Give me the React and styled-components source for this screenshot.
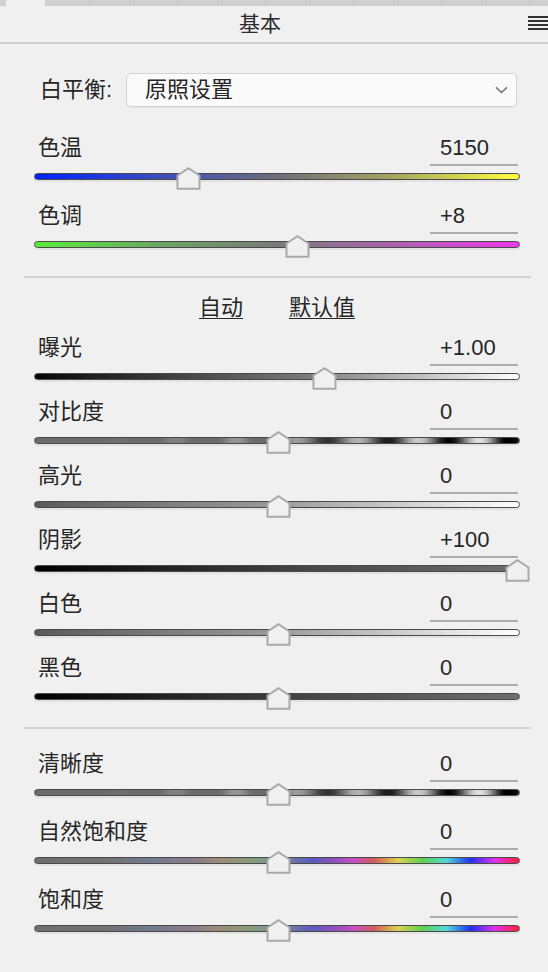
import React from "react"
import styled, { createGlobalStyle } from "styled-components"

/*
    Basic adjustments panel: white balance picker, tone sliders and presence sliders.
*/

const FONT = `"Liberation Sans", "Noto Sans CJK SC", sans-serif`

// contrast / clarity track: grey bands that get stronger towards the right
const stripeGradient = () => {
  const stops = []
  for (let i = 0; i <= 200; i++) {
    const p = i / 200
    const wave = Math.cos((2 * Math.PI * (p - 0.54)) / 0.1257)
    let l
    if (p < 0.5) {
      const amp = Math.max(0, (p - 0.15) / 0.35) * 55
      l = 108 + Math.max(0, wave) * amp
    } else {
      const amp = 40 + ((p - 0.5) / 0.5) * 90
      l = 108 + wave * amp
    }
    l = Math.round(Math.min(255, Math.max(0, l)))
    stops.push(`rgb(${l},${l},${l}) ${(p * 100).toFixed(1)}%`)
  }
  return `linear-gradient(to right, ${stops.join(", ")})`
}

const hueRamp =
  "linear-gradient(to right, #6e6e6e 0%, #727272 15%, #707a90 24%, #8a7a8a 32%, #9a8a78 38%, #8a9a78 44%, #7a9a8a 48%, #7080a0 52%, #5a5ac0 57%, #9050c0 62%, #c850c0 66%, #d05a5a 70%, #dcd250 75%, #60d050 80%, #50d8d8 85%, #2030f0 90%, #e030f0 95%, #ff2030 100%)"

const GRADIENTS = {
  temp: "linear-gradient(to right, #0022ff 0%, #3a4cc0 25%, #6d6d7a 50%, #a8a860 75%, #ffff40 100%)",
  tint: "linear-gradient(to right, #58ee3a 0%, #6aa860 25%, #7a7a7a 50%, #b060b0 75%, #ee38ee 100%)",
  exposure: "linear-gradient(to right, #050505 0%, #777777 55%, #ffffff 100%)",
  stripes: stripeGradient(),
  toWhite: "linear-gradient(to right, #5a5a5a 0%, #9a9a9a 50%, #ffffff 100%)",
  toGrey: "linear-gradient(to right, #000000 0%, #4a4a4a 60%, #6e6e6e 100%)",
  hue: hueRamp,
}

const whiteBalanceSliders = [
  { label: "色温", value: "5150", pos: 0.314, track: "temp" },
  { label: "色调", value: "+8", pos: 0.54, track: "tint" },
]

const toneSliders = [
  { label: "曝光", value: "+1.00", pos: 0.598, track: "exposure" },
  { label: "对比度", value: "0", pos: 0.5, track: "stripes" },
  { label: "高光", value: "0", pos: 0.5, track: "toWhite" },
  { label: "阴影", value: "+100", pos: 1, track: "toGrey" },
  { label: "白色", value: "0", pos: 0.5, track: "toWhite" },
  { label: "黑色", value: "0", pos: 0.5, track: "toGrey" },
]

const presenceSliders = [
  { label: "清晰度", value: "0", pos: 0.5, track: "stripes" },
  { label: "自然饱和度", value: "0", pos: 0.5, track: "hue" },
  { label: "饱和度", value: "0", pos: 0.5, track: "hue" },
]

const SliderThumb = () => (
  <svg width="25" height="23" viewBox="0 0 25 23">
    <path
      d="M1.5 8.5 L12.5 1.2 L23.5 8.5 V21.8 H1.5 Z"
      fill="#f0f0f0"
      stroke="#a9a9a9"
      strokeWidth="2"
      strokeLinejoin="miter"
    />
  </svg>
)

const Slider = ({ label, value, pos, track, pitch }) => (
  <SliderRow $pitch={pitch}>
    <RowHead>
      <Label>{label}</Label>
      <ValueBox>{value}</ValueBox>
    </RowHead>
    <Track $fill={GRADIENTS[track]}>
      {/* thumb travels between 3.5px insets of the 486px track */}
      <ThumbHolder style={{ left: `${3.5 + pos * 479 - 12.5}px` }}>
        <SliderThumb />
      </ThumbHolder>
    </Track>
  </SliderRow>
)

const SliderGroup = ({ items, pitch, top }) => (
  <Group $top={top}>
    {items.map(item => (
      <Slider key={item.label} pitch={pitch} {...item} />
    ))}
  </Group>
)

const App = () => {
  const tabs = Array.from({ length: 12 })
  return (
    <Panel>
      <GlobalStyle />
      <TabStrip>
        <TabSlot $active />
        {tabs.map((_, i) => (
          <TabSlot key={i} />
        ))}
      </TabStrip>
      <Header>
        <Title>基本</Title>
        <MenuButton width="20" height="14" viewBox="0 0 20 14">
          <rect x="0" y="0" width="20" height="2" fill="#333" />
          <rect x="0" y="4" width="20" height="2" fill="#333" />
          <rect x="0" y="8" width="20" height="2" fill="#333" />
          <rect x="0" y="12" width="20" height="2" fill="#333" />
        </MenuButton>
      </Header>
      <Content>
        <WbRow>
          <WbLabel>白平衡:</WbLabel>
          <Select>
            <span>原照设置</span>
            <svg width="13" height="8" viewBox="0 0 13 8">
              <path d="M1 1.2 L6.5 6.5 L12 1.2" fill="none" stroke="#6f6f6f" strokeWidth="1.5" />
            </svg>
          </Select>
        </WbRow>
        <SliderGroup items={whiteBalanceSliders} pitch={68} top={28} />
        <Divider $top={5} />
        <PresetLinks>
          <PresetLink>自动</PresetLink>
          <PresetLink>默认值</PresetLink>
        </PresetLinks>
        <SliderGroup items={toneSliders} pitch={64} top={14} />
        <Divider $top={8} />
        <SliderGroup items={presenceSliders} pitch={68} top={22} />
      </Content>
    </Panel>
  )
}

const GlobalStyle = createGlobalStyle`
  html, body {
    margin: 0;
    padding: 0;
    background: #f0f0f0;
  }
  body {
    font-family: ${FONT};
    color: #262626;
  }
`

const Panel = styled.div`
  width: 548px;
  min-height: 972px;
  background: #f0f0f0;
  overflow: hidden;
`

const TabStrip = styled.div`
  display: flex;
  height: 6px;
  padding-left: 6px;
  background: #d0d0d0;
`

const TabSlot = styled.div`
  flex: none;
  width: ${p => (p.$active ? "39px" : "43px")};
  height: 100%;
  background: ${p => (p.$active ? "#f0f0f0" : "transparent")};
  border-left: ${p => (p.$active ? "none" : "1px solid #c6c6c6")};
`

const Header = styled.div`
  display: grid;
  grid-template-columns: 1fr 28px;
  align-items: center;
  height: 36px;
  border-bottom: 2px solid #cfcfcf;
`

const Title = styled.div`
  text-align: center;
  font-size: 21px;
  line-height: 26px;
  color: #2a2a2a;
`

const MenuButton = styled.svg`
  justify-self: end;
  margin-top: -2px;
`

const Content = styled.div`
  padding: 0 28px 0 34px;
`

const WbRow = styled.div`
  display: flex;
  align-items: center;
  margin-top: 29px;
  height: 34px;
`

const WbLabel = styled.div`
  flex: none;
  width: 86px;
  padding-left: 6px;
  font-size: 22px;
  line-height: 26px;
`

const Select = styled.div`
  flex: 1;
  display: flex;
  align-items: center;
  justify-content: space-between;
  height: 34px;
  margin-right: 3px;
  padding: 0 8px 0 18px;
  box-sizing: border-box;
  background: #fafafa;
  border: 1px solid #d4d4d4;
  border-radius: 5px;
  box-shadow: 0 1px 1px rgba(0, 0, 0, 0.06);
  font-size: 22px;
  line-height: 26px;
`

const Group = styled.div`
  margin-top: ${p => p.$top}px;
`

const SliderRow = styled.div`
  height: ${p => p.$pitch}px;
`

const RowHead = styled.div`
  display: flex;
  justify-content: space-between;
  align-items: flex-start;
  height: 31px;
`

const Label = styled.div`
  padding-left: 4px;
  font-size: 22px;
  line-height: 26px;
`

const ValueBox = styled.div`
  width: 88px;
  height: 31px;
  margin-right: 2px;
  box-sizing: border-box;
  padding-left: 10px;
  border-bottom: 2px solid #adadad;
  font-size: 22px;
  line-height: 26px;
`

const Track = styled.div`
  position: relative;
  margin-top: 7px;
  height: 7px;
  box-sizing: border-box;
  border: 1px solid #4a4a4a;
  border-radius: 4px;
  background: ${p => p.$fill};
  box-shadow: 0 2px 0 #e2e2e2;
`

const ThumbHolder = styled.div`
  position: absolute;
  top: -7px;
  width: 25px;
  height: 23px;
  line-height: 0;
`

const Divider = styled.div`
  height: 2px;
  margin: ${p => p.$top}px -11px 0 -10px;
  background: #d4d4d4;
`

const PresetLinks = styled.div`
  display: flex;
  justify-content: center;
  gap: 46px;
  margin-top: 17px;
`

const PresetLink = styled.span`
  font-size: 22px;
  line-height: 26px;
  text-decoration: underline;
  text-underline-offset: 3px;
  text-decoration-thickness: 1px;
  cursor: pointer;
`

export default App
